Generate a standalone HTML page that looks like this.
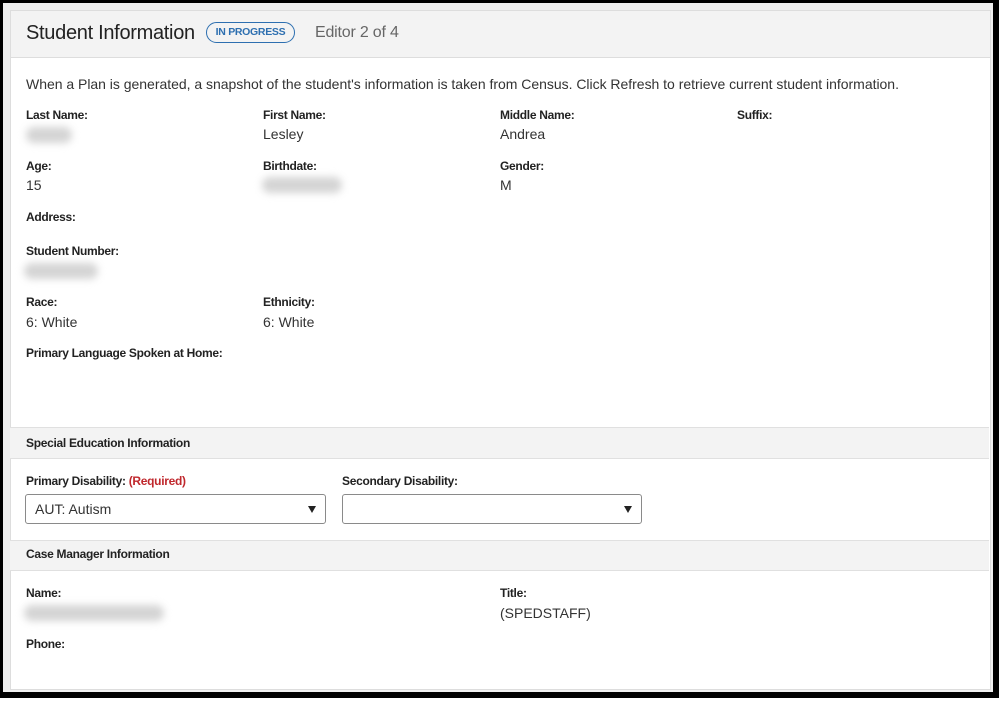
<!DOCTYPE html>
<html><head><meta charset="utf-8"><style>
*{margin:0;padding:0;box-sizing:border-box}
body{width:1002px;height:702px;background:#fff;font-family:"Liberation Sans",Arial,sans-serif;position:relative;overflow:hidden;color:#222}
.frame{position:absolute;left:0;top:0;width:999px;height:698px;background:#000}
.inner{position:absolute;left:3px;top:3px;width:990px;height:689px;background:#f0f0f0}
.card{position:absolute;left:10px;top:10px;width:981px;height:680px;background:#fff;border:1px solid #ddd}
.a{position:absolute;white-space:nowrap}
.l{font-size:12px;font-weight:bold;color:#222;letter-spacing:-0.3px}
.v{font-size:14px;color:#333}
.blur{position:absolute;background:#d4d4d4;border-radius:8px;filter:blur(4px)}
.sec{position:absolute;left:0;width:979px;background:#f3f3f3;border-top:1px solid #e0e0e0;border-bottom:1px solid #e0e0e0}
.sel{position:absolute;height:30px;border:1px solid #8a8a8a;border-radius:3px;background:#fff;font-size:14px;color:#333;padding:6px 9px}
.sel:after{content:"";position:absolute;right:9px;top:11px;border-left:4px solid transparent;border-right:4px solid transparent;border-top:7px solid #222}
</style></head><body>
<div class="frame"></div>
<div class="inner"></div>
<div class="card">
  <div style="position:absolute;left:0;top:0;width:979px;height:47px;background:#f3f3f3;border-bottom:1px solid #ddd"></div>
  <div class="a" style="left:15px;top:11px;font-size:20px;color:#222;letter-spacing:-0.3px">Student Information</div>
  <div class="a" style="left:195px;top:11px;width:89px;height:21px;border:1.5px solid #2d6fb0;border-radius:11px;font-size:10.5px;font-weight:bold;color:#2d6fb0;text-align:center;line-height:18px;letter-spacing:-0.3px">IN PROGRESS</div>
  <div class="a" style="left:304px;top:13px;font-size:16px;color:#666;letter-spacing:-0.2px">Editor 2 of 4</div>
</div>
<div class="a v" style="left:26px;top:76px;letter-spacing:-0.02px">When a Plan is generated, a snapshot of the student's information is taken from Census. Click Refresh to retrieve current student information.</div>

<div class="a l" style="left:26px;top:108px">Last Name:</div>
<div class="blur" style="left:26px;top:127px;width:46px;height:16px"></div>
<div class="a l" style="left:263px;top:108px">First Name:</div>
<div class="a v" style="left:263px;top:126px">Lesley</div>
<div class="a l" style="left:500px;top:108px">Middle Name:</div>
<div class="a v" style="left:500px;top:126px">Andrea</div>
<div class="a l" style="left:737px;top:108px">Suffix:</div>

<div class="a l" style="left:26px;top:159px">Age:</div>
<div class="a v" style="left:26px;top:177px">15</div>
<div class="a l" style="left:263px;top:159px">Birthdate:</div>
<div class="blur" style="left:262px;top:177px;width:80px;height:16px"></div>
<div class="a l" style="left:500px;top:159px">Gender:</div>
<div class="a v" style="left:500px;top:177px">M</div>

<div class="a l" style="left:26px;top:210px">Address:</div>
<div class="a l" style="left:26px;top:244px">Student Number:</div>
<div class="blur" style="left:24px;top:263px;width:74px;height:16px"></div>

<div class="a l" style="left:26px;top:295px">Race:</div>
<div class="a v" style="left:26px;top:314px">6: White</div>
<div class="a l" style="left:263px;top:295px">Ethnicity:</div>
<div class="a v" style="left:263px;top:314px">6: White</div>
<div class="a l" style="left:26px;top:346px">Primary Language Spoken at Home:</div>

<div class="sec" style="left:10px;top:427px;height:32px"></div>
<div class="a l" style="left:26px;top:436px">Special Education Information</div>
<div class="a l" style="left:26px;top:474px">Primary Disability: <span style="color:#c0282d">(Required)</span></div>
<div class="a l" style="left:342px;top:474px">Secondary Disability:</div>
<div class="sel" style="left:25px;top:494px;width:301px">AUT: Autism</div>
<div class="sel" style="left:342px;top:494px;width:300px"></div>

<div class="sec" style="left:10px;top:540px;height:31px"></div>
<div class="a l" style="left:26px;top:547px">Case Manager Information</div>
<div class="a l" style="left:26px;top:586px">Name:</div>
<div class="blur" style="left:24px;top:605px;width:140px;height:16px"></div>
<div class="a l" style="left:500px;top:586px">Title:</div>
<div class="a v" style="left:500px;top:605px">(SPEDSTAFF)</div>
<div class="a l" style="left:26px;top:637px">Phone:</div>
</body></html>
